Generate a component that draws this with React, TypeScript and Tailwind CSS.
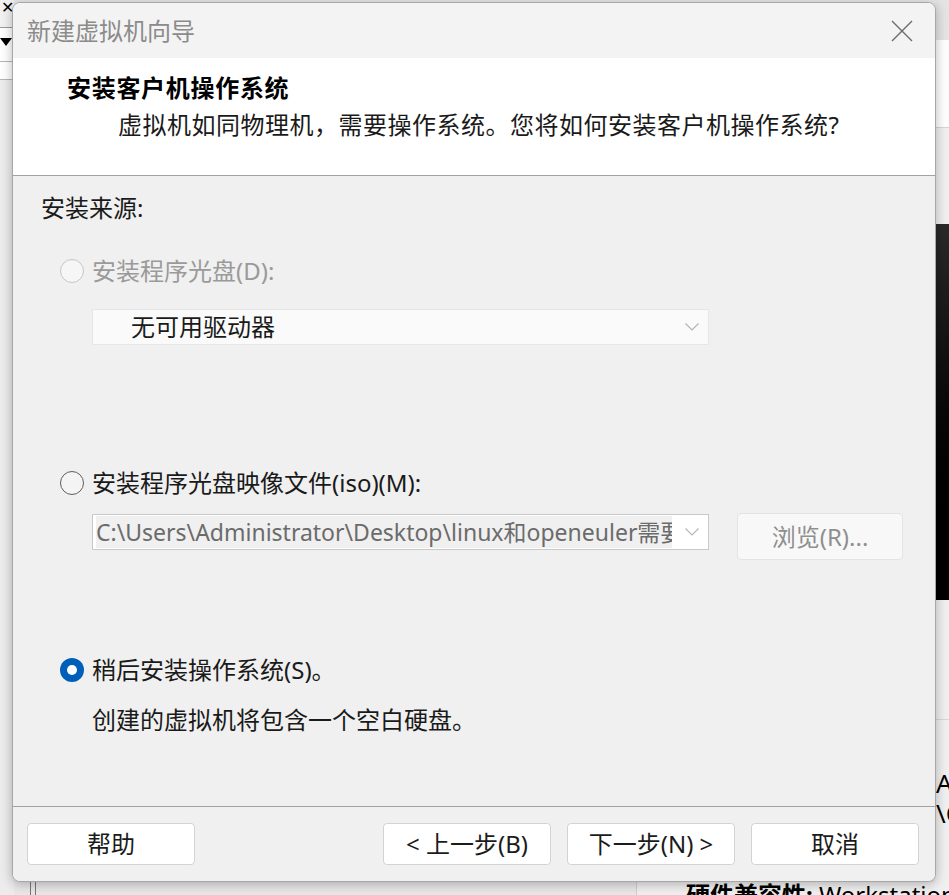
import React from 'react';

const font = "font-['Noto_Sans','Noto_Sans_CJK_SC',sans-serif]";

function Radio({ state }: { state: 'disabled' | 'off' | 'on' }) {
  if (state === 'on') {
    return (
      <span className="flex h-6 w-6 items-center justify-center rounded-full bg-[#005fb8]">
        <span className="h-[10px] w-[10px] rounded-full bg-white" />
      </span>
    );
  }
  return (
    <span
      className={
        state === 'disabled'
          ? 'h-6 w-6 rounded-full border-[1.5px] border-[#c6c6c6] bg-[#f6f6f6]'
          : 'h-6 w-6 rounded-full border-[1.5px] border-[#5e5e5e] bg-[#f4f4f4]'
      }
    />
  );
}

function Chevron({ color }: { color: string }) {
  return (
    <svg width="16" height="10" viewBox="0 0 16 10" fill="none">
      <path d="M1.5 1.5 L8 8 L14.5 1.5" stroke={color} strokeWidth="1.2" />
    </svg>
  );
}

function FooterButton({ label }: { label: string }) {
  return (
    <button className="flex h-[42px] w-[168px] items-center justify-center rounded-[4px] border border-[#d3d3d3] bg-white text-[24px] text-[#1b1b1b]">
      {label}
    </button>
  );
}

function Backdrop() {
  return (
    <>
      {/* left edge of the window underneath */}
      <div className="absolute left-0 top-0 h-[895px] w-[14px] bg-[#ececec]">
        <div className="h-[28px] border-b border-[#9a9a9a] bg-[#f2f2f2]">
          <span className="block pl-[1px] text-[16px] leading-[14px] text-black">✕</span>
        </div>
        <div className="h-[34px] border-b border-[#b5b5b5] bg-white pt-[10px]">
          <span className="block h-0 w-0 border-x-[6px] border-t-[8px] border-x-transparent border-t-black" />
        </div>
        <div className="h-[18px] border-b border-[#b5b5b5] bg-white" />
      </div>
      <div className="absolute bottom-0 left-[30px] h-[14px] w-[6px] border-x border-[#777]" />

      {/* right edge: toolbar, preview and details */}
      <div className="absolute right-0 top-0 flex h-[895px] w-[14px] flex-col overflow-hidden bg-[#f0f0f0]">
        <div className="h-[40px] shrink-0 bg-[#e4e4e4]" />
        <div className="h-[88px] shrink-0 border-b border-[#d5d5d5] bg-white" />
        <div className="h-[96px] shrink-0" />
        <div className="h-[376px] shrink-0 bg-gradient-to-b from-[#2a2a2a] via-[#080808] to-black" />
        <div className="h-[120px] shrink-0 border-b border-[#d8d8d8]" />
        <div className={`${font} pl-[1px] pt-[48px] text-[26px] leading-[30px] whitespace-nowrap text-black`}>
          <div>Ac</div>
          <div>\C</div>
        </div>
      </div>
      <div className="absolute bottom-0 left-[636px] h-[13px] w-[313px] overflow-hidden border-l border-[#cfcfcf] bg-[#f0f0f0]">
        <div className={`${font} pl-[49px] pt-[1px] text-[24px] leading-[24px] whitespace-nowrap text-black`}>
          <span className="font-bold">硬件兼容性:</span> Workstation
        </div>
      </div>
    </>
  );
}

export default function App() {
  return (
    <div className={`${font} relative h-[895px] w-[949px] overflow-hidden bg-[#e8e8e8]`}>
      <Backdrop />

      <div className="absolute left-[12px] top-[2px] flex h-[880px] w-[924px] flex-col overflow-hidden rounded-[8px] border border-[#a7a7a7] bg-[#f0f0f0] shadow-[0_2px_12px_rgba(0,0,0,0.28)]">
        {/* title bar */}
        <div className="flex h-[55px] shrink-0 items-center justify-between bg-[#f3f3f3] pl-[14px] pr-[22px]">
          <span className="text-[24px] text-[#8b8b8b]">新建虚拟机向导</span>
          <svg width="22" height="22" viewBox="0 0 22 22">
            <path d="M1 1 L21 21 M21 1 L1 21" stroke="#6b6b6b" strokeWidth="1.4" />
          </svg>
        </div>

        {/* page header */}
        <div className="h-[118px] shrink-0 border-b border-[#a2a2a2] bg-white pl-[54px] pt-[14px]">
          <div className="h-[32px] text-[24px] font-bold leading-[32px] tracking-[0.7px] text-black">安装客户机操作系统</div>
          <div className="mt-[5px] h-[32px] pl-[51px] text-[24px] leading-[32px] tracking-[0.5px] text-[#1a1a1a]">
            虚拟机如同物理机，需要操作系统。您将如何安装客户机操作系统?
          </div>
        </div>

        {/* install source options */}
        <div className="flex flex-1 flex-col pl-[28px] pt-[16px] text-[24px] leading-[32px] text-[#1a1a1a]">
          <div className="h-[32px]">安装来源:</div>

          <div className="mt-[31px] flex h-[32px] items-center gap-[8px] pl-[19px]">
            <Radio state="disabled" />
            <span className="text-[#9a9a9a]">安装程序光盘(D):</span>
          </div>
          <div className="ml-[51px] mt-[22px] flex h-[36px] w-[617px] items-center justify-between border border-[#e6e6e6] bg-[#fafafa] pl-[38px] pr-[8px]">
            <span className="text-[#1a1a1a]">无可用驱动器</span>
            <Chevron color="#b3b3b3" />
          </div>

          <div className="mt-[122px] flex h-[32px] items-center gap-[8px] pl-[19px]">
            <Radio state="off" />
            <span>安装程序光盘映像文件(iso)(M):</span>
          </div>
          <div className="ml-[51px] mt-[14px] flex h-[47px] items-start">
            <div className="mt-[1px] flex h-[36px] w-[617px] items-center justify-between border border-[#c9c9c9] bg-white pl-[3px] pr-[8px]">
              <span className="block h-[32px] w-[576px] overflow-hidden whitespace-nowrap bg-[#f0f0f0] text-[23px] leading-[32px] text-[#6b6b6b]">
                C:\Users\Administrator\Desktop\linux和openeuler需要用到的镜像文件
              </span>
              <Chevron color="#b8b8b8" />
            </div>
            <button className="ml-[28px] flex h-[47px] w-[166px] items-center justify-center rounded-[4px] border border-[#e3e3e3] bg-[#f8f8f8] text-[24px] text-[#8f8f8f]">
              浏览(R)...
            </button>
          </div>

          <div className="mt-[94px] flex h-[32px] items-center gap-[8px] pl-[19px]">
            <Radio state="on" />
            <span>稍后安装操作系统(S)。</span>
          </div>
          <div className="ml-[51px] mt-[18px] h-[32px]">创建的虚拟机将包含一个空白硬盘。</div>
        </div>

        {/* wizard buttons */}
        <div className="flex h-[75px] shrink-0 items-start border-t border-[#a2a2a2] bg-[#f0f0f0] pl-[14px] pr-[16px] pt-[16px]">
          <FooterButton label="帮助" />
          <div className="ml-auto flex gap-[16px]">
            <FooterButton label="< 上一步(B)" />
            <FooterButton label="下一步(N) >" />
            <FooterButton label="取消" />
          </div>
        </div>
      </div>
    </div>
  );
}
